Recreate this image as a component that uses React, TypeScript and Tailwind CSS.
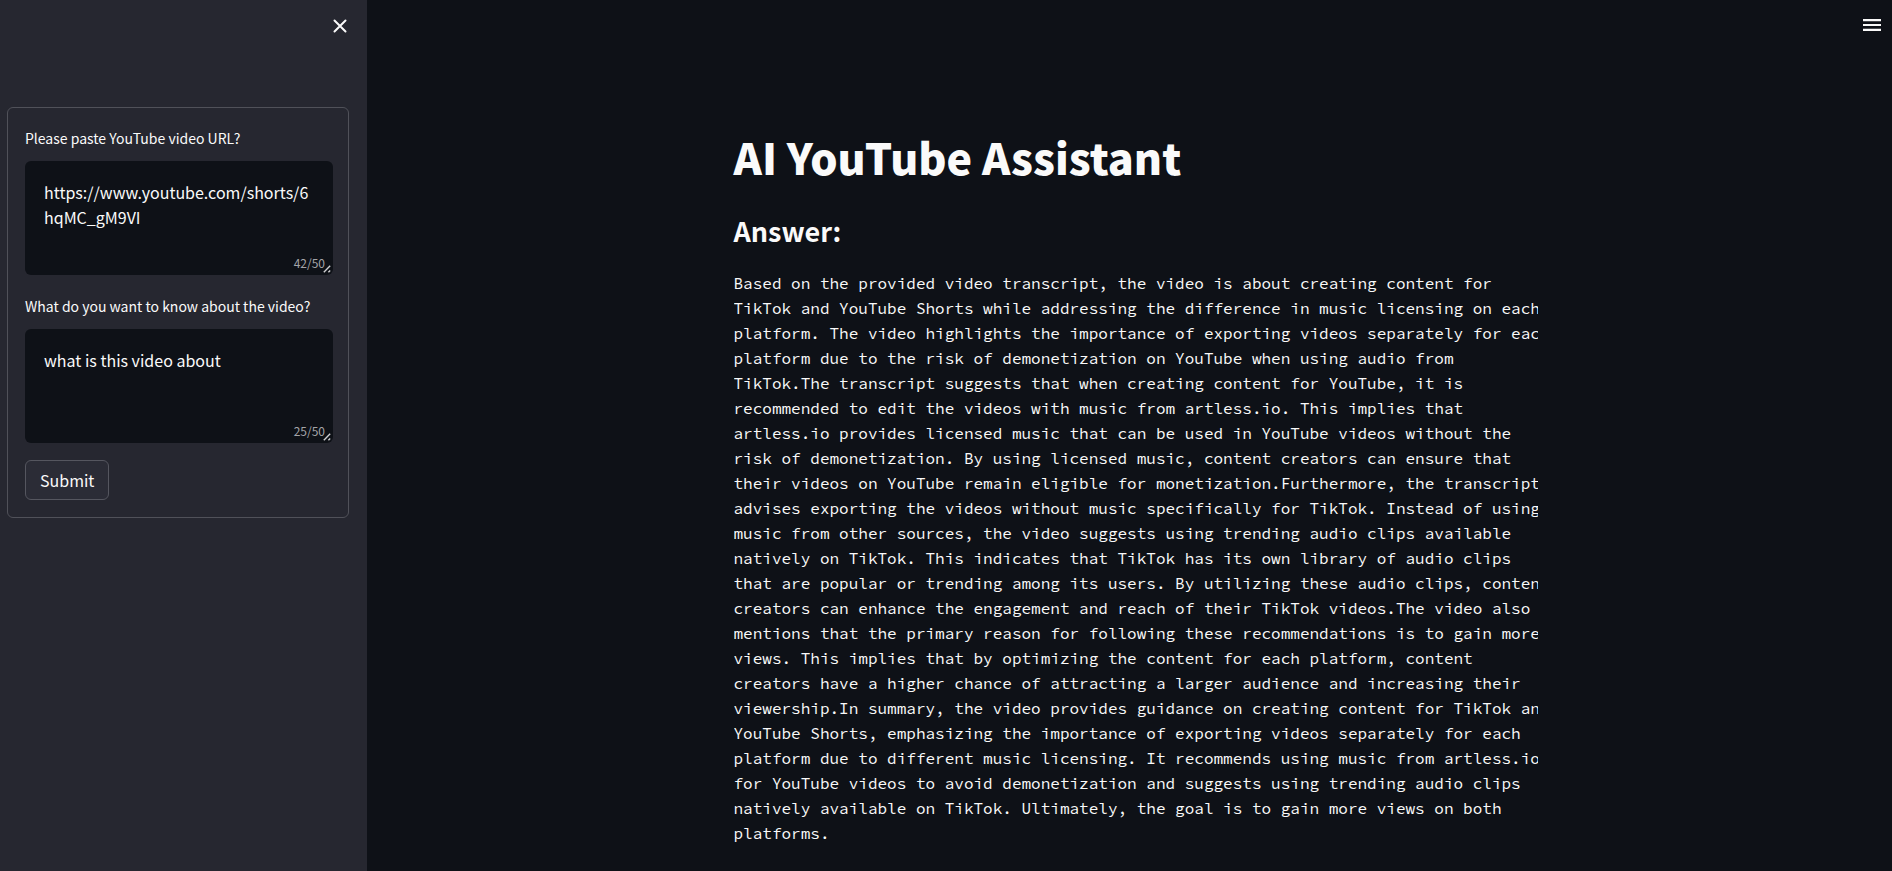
import { useState } from "react";

const ANSWER = `Based on the provided video transcript, the video is about creating content for
TikTok and YouTube Shorts while addressing the difference in music licensing on each
platform. The video highlights the importance of exporting videos separately for each
platform due to the risk of demonetization on YouTube when using audio from
TikTok.The transcript suggests that when creating content for YouTube, it is
recommended to edit the videos with music from artless.io. This implies that
artless.io provides licensed music that can be used in YouTube videos without the
risk of demonetization. By using licensed music, content creators can ensure that
their videos on YouTube remain eligible for monetization.Furthermore, the transcript
advises exporting the videos without music specifically for TikTok. Instead of using
music from other sources, the video suggests using trending audio clips available
natively on TikTok. This indicates that TikTok has its own library of audio clips
that are popular or trending among its users. By utilizing these audio clips, content
creators can enhance the engagement and reach of their TikTok videos.The video also
mentions that the primary reason for following these recommendations is to gain more
views. This implies that by optimizing the content for each platform, content
creators have a higher chance of attracting a larger audience and increasing their
viewership.In summary, the video provides guidance on creating content for TikTok and
YouTube Shorts, emphasizing the importance of exporting videos separately for each
platform due to different music licensing. It recommends using music from artless.io
for YouTube videos to avoid demonetization and suggests using trending audio clips
natively available on TikTok. Ultimately, the goal is to gain more views on both
platforms.`;

const MAX_LENGTH = 50;

type FieldProps = { id: string; label: string; initial: string };

function TextAreaField({ id, label, initial }: FieldProps) {
  const [value, setValue] = useState(initial);
  return (
    <div className="flex flex-col">
      <label htmlFor={id} className="mb-[9px] text-[14px] leading-[28px]">
        {label}
      </label>
      <div className="relative flex">
        <textarea
          id={id}
          value={value}
          maxLength={MAX_LENGTH}
          onChange={(e) => setValue(e.target.value)}
          className="block h-[114px] w-full resize-y overflow-hidden rounded-md bg-[#0e1117] px-[19px] py-[19px] text-[16px] leading-[25px] break-all text-[#fafafa] caret-[#fafafa] outline-none focus:ring-1 focus:ring-[#ff4b4b] [&::-webkit-resizer]:bg-transparent"
        />
        <span className="pointer-events-none absolute right-2 bottom-1 text-[12px] leading-4 text-[#a3a4a8]">
          {value.length}/{MAX_LENGTH}
        </span>
        <svg
          viewBox="0 0 8 8"
          aria-hidden="true"
          className="pointer-events-none absolute right-[2px] bottom-[2px] size-2"
          fill="none"
          stroke="#d0d0d2"
          strokeWidth="1.4"
        >
          <path d="M0.8 7.2 7.2 0.8M5.4 7.2 7.2 5.4" />
        </svg>
      </div>
    </div>
  );
}

function Sidebar() {
  return (
    <aside className="flex w-[367px] shrink-0 flex-col bg-[#262730]">
      <div className="flex h-[107px] items-start justify-end pt-3 pr-[13px]">
        <button type="button" aria-label="Close sidebar" className="flex size-7 items-center justify-center">
          <svg viewBox="0 0 14 14" className="size-[14px]" fill="none" stroke="currentColor" strokeWidth="2" strokeLinecap="round">
            <path d="M1.5 1.5 12.5 12.5M12.5 1.5 1.5 12.5" />
          </svg>
        </button>
      </div>
      <form
        onSubmit={(e) => e.preventDefault()}
        className="mr-[18px] ml-[7px] flex flex-col gap-[17px] rounded-md border border-[#505159] pt-4 pr-[15px] pb-[17px] pl-[17px]"
      >
        <TextAreaField
          id="video-url"
          label="Please paste YouTube video URL?"
          initial="https://www.youtube.com/shorts/6hqMC_gM9VI"
        />
        <TextAreaField
          id="question"
          label="What do you want to know about the video?"
          initial={"what is this video about\n"}
        />
        <button
          type="submit"
          className="h-10 self-start rounded-md border border-[#55565f] bg-[#2b2c36] px-[14px] text-[16px] leading-6"
        >
          Submit
        </button>
      </form>
    </aside>
  );
}

export default function App() {
  return (
    <div className="flex min-h-screen bg-[#0e1117] font-['Source_Sans_Pro','Noto_Sans_CJK_SC',sans-serif] text-[#fafafa]">
      <Sidebar />
      <main className="relative flex min-w-0 flex-1 justify-center px-[18px]">
        <button type="button" aria-label="Main menu" className="absolute top-[11px] right-[11px] flex h-7 w-[18px] items-center">
          <svg viewBox="0 0 18 14" className="h-[14px] w-[18px]" fill="currentColor">
            <path d="M0 1h18v2.2H0zM0 5.9h18v2.2H0zM0 10.8h18v2.2H0z" />
          </svg>
        </button>
        <div className="w-full max-w-[792px] pt-[126px]">
          <h1 className="text-[43px] leading-[60px] font-extrabold">AI YouTube Assistant</h1>
          <h2 className="mt-[25px] text-[27px] leading-10 font-bold">Answer:</h2>
          <pre className="-mr-3 mt-5 overflow-hidden font-['Source_Code_Pro','Noto_Sans_Mono_CJK_SC','Liberation_Mono',monospace] text-[16px] leading-[25px]">
            {ANSWER}
          </pre>
        </div>
      </main>
    </div>
  );
}
